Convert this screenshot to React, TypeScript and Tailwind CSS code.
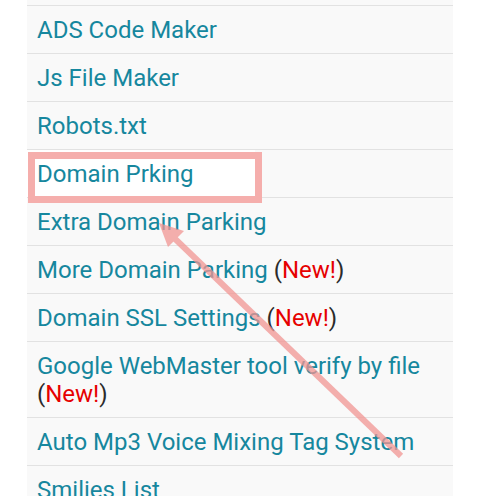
import React from "react";

type Item = { label: string; isNew?: boolean };

const items: Item[] = [
  { label: "ADS Code Maker" },
  { label: "Js File Maker" },
  { label: "Robots.txt" },
  { label: "Domain Prking" },
  { label: "Extra Domain Parking" },
  { label: "More Domain Parking", isNew: true },
  { label: "Domain SSL Settings", isNew: true },
  { label: "Google WebMaster tool verify by file", isNew: true },
  { label: "Auto Mp3 Voice Mixing Tag System" },
  { label: "Smilies List" },
];

export default function App() {
  return (
    <div
      className="relative w-[480px] h-[496px] overflow-hidden bg-white"
      style={{ fontFamily: "Roboto, 'Noto Sans', sans-serif" }}
    >
      <div className="ml-[27px] w-[426px] bg-[#f9f9f9] pt-[5px] h-full">
        {items.map((it) => (
          <div
            key={it.label}
            className={
              "border-t border-[#e2e2e2] pl-[10px] pr-2 pt-[10px] pb-[9px] text-[24px] leading-[28px] text-[#16879e] " +
              (it.label === "Domain Prking"
                ? "bg-[linear-gradient(to_right,#ffffff_228px,#f9f9f9_228px)]"
                : "")
            }
          >
            {it.label}
            {it.isNew && (
              <>
                {" "}
                <span className="text-[#2b2b2b]">(</span>
                <span className="text-[#e60000]">New!</span>
                <span className="text-[#2b2b2b]">)</span>
              </>
            )}
          </div>
        ))}
      </div>
      <svg
        className="absolute left-0 top-0 pointer-events-none"
        width="480"
        height="496"
        viewBox="0 0 480 496"
      >
        <rect
          x="31.5"
          y="155.5"
          width="227"
          height="44"
          fill="none"
          stroke="#f5aeac"
          strokeWidth="7"
        />
        <g opacity="0.75">
          <line
            x1="401"
            y1="456"
            x2="170"
            y2="234"
            stroke="#f29593"
            strokeWidth="6"
          />
          <polygon points="159,223 184,231 168,247" fill="#f29593" />
        </g>
      </svg>
    </div>
  );
}
